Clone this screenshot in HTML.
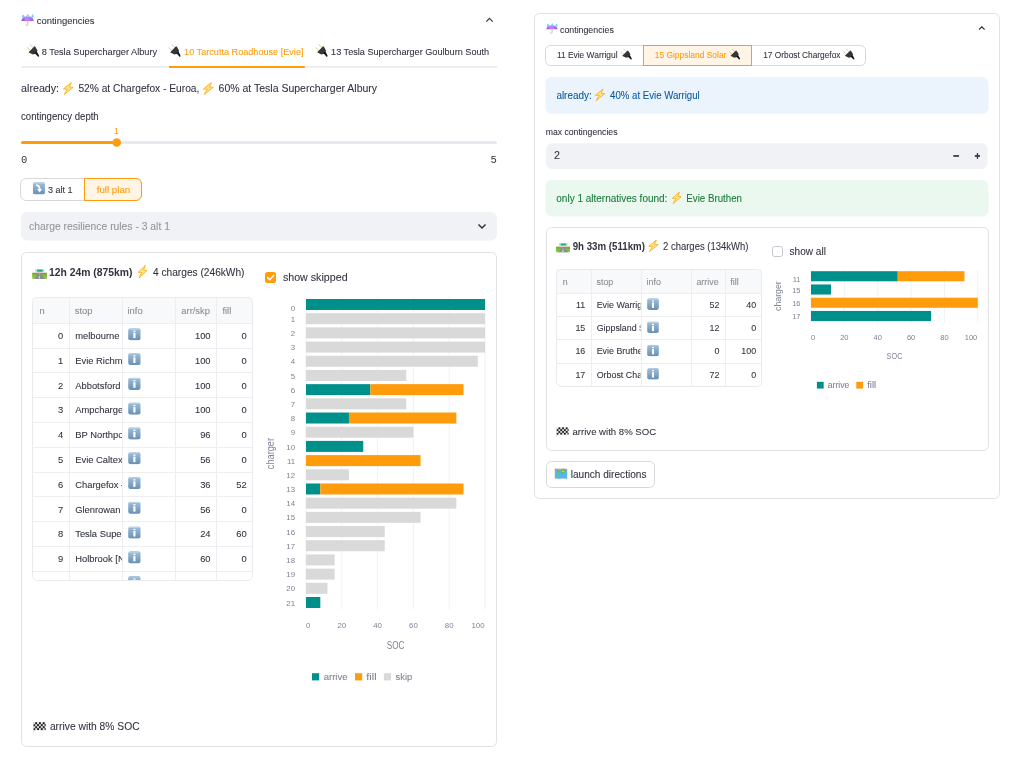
<!DOCTYPE html>
<html><head><meta charset="utf-8"><style>
html,body{margin:0;padding:0;background:#fff;width:1013px;height:762px;overflow:hidden}
svg{display:block;will-change:transform}
</style></head><body>
<svg width="1013" height="762" viewBox="0 0 1013 762" font-family="Liberation Sans, sans-serif">
<defs>
<linearGradient id="gInfo" x1="0" y1="0" x2="0" y2="1"><stop offset="0" stop-color="#A3C1DC"/><stop offset="1" stop-color="#6690B5"/></linearGradient>
<linearGradient id="gGrass" x1="0" y1="0" x2="0" y2="1"><stop offset="0" stop-color="#6AA92B"/><stop offset="1" stop-color="#9BD44A"/></linearGradient>
<linearGradient id="gCanopy" x1="0" y1="0" x2="1" y2="0"><stop offset="0" stop-color="#8A4FE0"/><stop offset="0.5" stop-color="#D27DFF"/><stop offset="1" stop-color="#9558EA"/></linearGradient>
<symbol id="umbrella" viewBox="0 0 32 32" preserveAspectRatio="none">
  <path d="M0.5 19 Q2.5 12 8 8.5 Q16 5.5 24 8.5 Q29.5 12 31.5 19 Z" fill="url(#gCanopy)"/>
  <path d="M16.3 18.8 L16.3 28.5 Q16.3 31.5 13.5 31 Q11.8 30.5 11.8 28" stroke="#B8B8B8" stroke-width="2.2" fill="none"/>
  <path d="M4.5 2 Q0.5 8 3 11 Q6 13 8.5 10 Q9.5 7 4.5 2Z" fill="#74CFFA"/>
  <path d="M16.5 0.5 Q12.5 5.5 14 8.5 Q16.5 11 19.5 8.5 Q21 5.5 16.5 0.5Z" fill="#7DD3FB"/>
  <path d="M28 1.5 Q24 7 25.5 10 Q28 12 31 9.5 Q32 6.5 28 1.5Z" fill="#74CFFA"/>
  <path d="M10.7 10 Q8.5 13.5 10.5 15.5 Q12.8 13.5 10.7 10Z" fill="#9EE2FF"/>
  <path d="M22 9.5 Q20 12.5 22 14 Q24 12.5 22 9.5Z" fill="#55B5F2"/>
</symbol>
<symbol id="plug" viewBox="0 0 32 32" preserveAspectRatio="none">
  <path d="M1.5 8.8 L10 16.8" stroke="#DCC685" stroke-width="2.2" stroke-linecap="round"/>
  <path d="M8.8 1.5 L17.3 9.5" stroke="#DCC685" stroke-width="2.2" stroke-linecap="round"/>
  <path d="M5.3 20.3 L20.1 5.8 L22.2 7 L27.8 16.6 L23.1 24.2 L16 25.9 L5.9 21.4 Z" fill="#363636"/>
  <path d="M20.5 22.5 L26 18.5 L32 30 L29.5 32 Z" fill="#141414"/>
</symbol>
<symbol id="bolt" viewBox="0 0 32 32" preserveAspectRatio="none">
  <path d="M25.3 1.2 L1.2 17.3 L13.2 17.8 L3.4 31 L31 13.2 L19.4 12.2 Z" fill="#FFE57E" stroke="#F6A817" stroke-width="2.2" stroke-linejoin="round"/>
</symbol>
<symbol id="road" viewBox="0 0 32 32" preserveAspectRatio="none">
  <rect x="0" y="12.7" width="32" height="19.3" fill="url(#gGrass)"/>
  <path d="M13.7 12.7 L17.2 12.7 L28.5 32 L4.6 32Z" fill="#8C8C96"/>
  <path d="M15.3 14.5 L15.9 14.5 L16.2 19.5 L15 19.5Z M14.6 22.5 L16.6 22.5 L17.2 30.5 L14 30.5Z" fill="#D6D6DC"/>
  <rect x="6.3" y="0.5" width="20.1" height="12.2" fill="#DADADF"/>
  <rect x="10.2" y="2.5" width="13" height="6.6" rx="2.6" fill="#25B27C"/>
  <rect x="0" y="10.6" width="32" height="1.4" fill="#F0C6C6"/>
</symbol>
<symbol id="flag" viewBox="0 0 32 32" preserveAspectRatio="none">
  <path d="M1 1.5 Q9 0 16 1.5 Q23 3 31 1.5 L31 24.5 Q23 26 16 24.5 Q9 23 1 24.5 Z" fill="#E4E4E4"/>
  <g fill="#1F1F1F">
   <rect x="5.57" y="1.2" width="4.57" height="5.9"/><rect x="14.7" y="1.0" width="4.57" height="5.9"/><rect x="23.9" y="1.0" width="4.57" height="5.9"/>
   <rect x="1" y="7.1" width="4.57" height="5.9"/><rect x="10.14" y="6.8" width="4.57" height="5.9"/><rect x="19.3" y="6.9" width="4.57" height="5.9"/><rect x="28.4" y="6.7" width="2.6" height="5.9"/>
   <rect x="5.57" y="13" width="4.57" height="5.9"/><rect x="14.7" y="12.7" width="4.57" height="5.9"/><rect x="23.9" y="12.8" width="4.57" height="5.9"/>
   <rect x="1" y="18.9" width="4.57" height="5.6"/><rect x="10.14" y="18.6" width="4.57" height="5.6"/><rect x="19.3" y="18.7" width="4.57" height="5.6"/><rect x="28.4" y="18.6" width="2.6" height="5.6"/>
  </g>
  <rect x="0" y="1" width="1.6" height="31" fill="#C8C8C8"/>
</symbol>
<symbol id="map" viewBox="0 0 32 32" preserveAspectRatio="none">
  <rect x="0" y="0" width="32" height="32" fill="#F1DCCF"/>
  <path d="M1.1 2 L11 3 L21 2 L30.9 3 L30.9 30.6 L21 29.6 L11 30.6 L1.1 29.6Z" fill="#53B8EC"/>
  <path d="M5.7 6 Q10 4.5 13.1 7 Q12.5 12 9 13 Q5.5 11 5.7 6Z M9.1 17 Q12 16.5 13.7 18 Q12.5 22 10.5 22.4 Q9 20 9.1 17Z M16.3 6.5 Q23 4 28.9 6 Q28 11 23 12.5 Q21 17 18 19 Q16.5 14 17 11 Q16 9 16.3 6.5Z" fill="#7FB33A"/>
  <path d="M19 8 Q23 7.5 25 9.5 Q22 12 19.5 11.5Z" fill="#E8D65A"/>
  <circle cx="27" cy="21.1" r="1.7" fill="#E89B4A"/>
</symbol>
<symbol id="hook" viewBox="0 0 32 32" preserveAspectRatio="none">
  <rect x="0.5" y="0.5" width="31" height="31" rx="5" fill="url(#gInfo)"/>
  <rect x="3" y="2" width="26" height="1.6" rx="0.8" fill="#D2E2EF" opacity=".8"/>
  <path d="M8.6 7.8 Q17.8 8.2 17.8 18" stroke="#fff" stroke-width="4.3" fill="none"/>
  <path d="M11.2 17.8 L24.2 17.8 L17.8 26.5Z" fill="#fff"/>
</symbol>
<symbol id="info" viewBox="0 0 32 32" preserveAspectRatio="none">
  <rect x="0.5" y="0.5" width="31" height="31" rx="5.5" fill="url(#gInfo)"/>
  <rect x="3" y="2" width="26" height="1.6" rx="0.8" fill="#D2E2EF" opacity=".8"/>
  <rect x="13.3" y="6.5" width="5.4" height="3.2" fill="#fff"/>
  <rect x="13.3" y="12" width="5.4" height="14" fill="#fff"/>
</symbol>
</defs>

<use href="#umbrella" x="21.00" y="13.50" width="13.20" height="12.50"/>
<text x="36.70" y="24.00" font-size="9.5" fill="#31333F" stroke="#31333F" stroke-width="0.08" textLength="57.80" lengthAdjust="spacingAndGlyphs">contingencies</text>
<path d="M486.3 21.6 L489.5 18.4 L492.7 21.6" stroke="#31333F" stroke-width="1.15" fill="none"/>
<rect x="21.00" y="66.00" width="476.00" height="2.00" rx="0" fill="#EEEEF0"/>
<use href="#plug" x="26.50" y="43.90" width="12.70" height="13.00"/>
<text x="41.80" y="55.00" font-size="9.8" fill="#31333F" stroke="#31333F" stroke-width="0.08" textLength="115.30" lengthAdjust="spacingAndGlyphs">8 Tesla Supercharger Albury</text>
<use href="#plug" x="168.10" y="43.90" width="12.70" height="13.00"/>
<text x="184.10" y="55.00" font-size="9.8" fill="#FF9C0B" stroke="#FF9C0B" stroke-width="0.08" textLength="119.40" lengthAdjust="spacingAndGlyphs">10 Tarcutta Roadhouse [Evie]</text>
<use href="#plug" x="315.10" y="43.90" width="12.70" height="13.00"/>
<text x="331.10" y="55.00" font-size="9.8" fill="#31333F" stroke="#31333F" stroke-width="0.08" textLength="158.10" lengthAdjust="spacingAndGlyphs">13 Tesla Supercharger Goulburn South</text>
<rect x="169.00" y="66.00" width="135.80" height="2.00" rx="0" fill="#FF9C0B"/>
<text x="21.10" y="92.00" font-size="11" fill="#31333F" stroke="#31333F" stroke-width="0.08" textLength="38.00" lengthAdjust="spacingAndGlyphs">already:</text>
<use href="#bolt" x="63.00" y="82.00" width="10.60" height="13.00"/>
<text x="78.40" y="92.00" font-size="11" fill="#31333F" stroke="#31333F" stroke-width="0.08" textLength="121.00" lengthAdjust="spacingAndGlyphs">52% at Chargefox - Euroa,</text>
<use href="#bolt" x="203.00" y="82.00" width="10.70" height="13.00"/>
<text x="218.60" y="92.00" font-size="11" fill="#31333F" stroke="#31333F" stroke-width="0.08" textLength="158.50" lengthAdjust="spacingAndGlyphs">60% at Tesla Supercharger Albury</text>
<text x="21.10" y="120.00" font-size="10.1" fill="#31333F" stroke="#31333F" stroke-width="0.08" textLength="77.60" lengthAdjust="spacingAndGlyphs">contingency depth</text>
<rect x="21.00" y="141.00" width="476.00" height="3.00" rx="1.5" fill="#E8EAEF"/>
<rect x="21.00" y="141.00" width="96.00" height="3.00" rx="1.5" fill="#FF9C0B"/>
<circle cx="116.7" cy="142.5" r="4.3" fill="#FF9C0B"/>
<text x="116.50" y="134.00" font-size="8.8" fill="#FF9C0B" stroke="#FF9C0B" stroke-width="0.08" text-anchor="middle">1</text>
<text x="21.00" y="163.00" font-size="10.5" fill="#31333F" font-family="Liberation Mono">0</text>
<text x="496.80" y="163.00" font-size="10.5" fill="#31333F" text-anchor="end" font-family="Liberation Mono">5</text>
<rect x="20.50" y="178.50" width="121.00" height="22.00" rx="5.5" fill="#fff" stroke="#D8D8DC" stroke-width="1"/>
<path d="M84.5 178.5 H136 A5.5 5.5 0 0 1 141.5 184 V195 A5.5 5.5 0 0 1 136 200.5 H84.5 Z" fill="#FFF4E6" stroke="#FF9C0B" stroke-width="1"/>
<use href="#hook" x="32.80" y="182.00" width="12.30" height="12.60"/>
<text x="47.90" y="193.00" font-size="9.8" fill="#31333F" stroke="#31333F" stroke-width="0.08" textLength="24.60" lengthAdjust="spacingAndGlyphs">3 alt 1</text>
<text x="96.70" y="193.00" font-size="9.8" fill="#FF9C0B" stroke="#FF9C0B" stroke-width="0.08" textLength="33.60" lengthAdjust="spacingAndGlyphs">full plan</text>
<rect x="21.00" y="212.00" width="476.00" height="28.50" rx="6" fill="#F0F2F6"/>
<text x="29.10" y="230.00" font-size="10.6" fill="#94959C" stroke="#94959C" stroke-width="0.08" textLength="140.80" lengthAdjust="spacingAndGlyphs">charge resilience rules - 3 alt 1</text>
<path d="M478.5 224.5 L482 228 L485.5 224.5" stroke="#31333F" stroke-width="1.5" fill="none"/>
<rect x="21.50" y="252.50" width="475.00" height="494.00" rx="5" fill="none" stroke="#E1E1E3" stroke-width="1"/>
<use href="#road" x="32.10" y="268.70" width="14.90" height="10.30"/>
<text x="49.00" y="276.00" font-size="10.3" fill="#31333F" font-weight="700" textLength="83.50" lengthAdjust="spacingAndGlyphs">12h 24m (875km)</text>
<use href="#bolt" x="137.90" y="264.90" width="9.40" height="13.60"/>
<text x="153.00" y="276.00" font-size="10.2" fill="#31333F" stroke="#31333F" stroke-width="0.08" textLength="91.50" lengthAdjust="spacingAndGlyphs">4 charges (246kWh)</text>
<rect x="265.00" y="272.00" width="11.00" height="11.00" rx="2.5" fill="#FF9C0B"/>
<path d="M267.6 277.6 L269.8 279.7 L273.6 275.4" stroke="#fff" stroke-width="1.5" fill="none" stroke-linecap="round" stroke-linejoin="round"/>
<text x="282.90" y="281.00" font-size="10.8" fill="#31333F" stroke="#31333F" stroke-width="0.08" textLength="64.70" lengthAdjust="spacingAndGlyphs">show skipped</text>
<svg x="32" y="297" width="221" height="284" overflow="hidden"><g transform="translate(-32,-297)">
<rect x="32.00" y="297.00" width="221.00" height="26.00" rx="0" fill="#F8F9FB"/>
<rect x="32.00" y="323.00" width="221.00" height="1.00" rx="0" fill="#EDEEF1"/>
<rect x="32.00" y="348.00" width="221.00" height="1.00" rx="0" fill="#EDEEF1"/>
<rect x="32.00" y="372.00" width="221.00" height="1.00" rx="0" fill="#EDEEF1"/>
<rect x="32.00" y="397.00" width="221.00" height="1.00" rx="0" fill="#EDEEF1"/>
<rect x="32.00" y="422.00" width="221.00" height="1.00" rx="0" fill="#EDEEF1"/>
<rect x="32.00" y="447.00" width="221.00" height="1.00" rx="0" fill="#EDEEF1"/>
<rect x="32.00" y="472.00" width="221.00" height="1.00" rx="0" fill="#EDEEF1"/>
<rect x="32.00" y="496.00" width="221.00" height="1.00" rx="0" fill="#EDEEF1"/>
<rect x="32.00" y="521.00" width="221.00" height="1.00" rx="0" fill="#EDEEF1"/>
<rect x="32.00" y="546.00" width="221.00" height="1.00" rx="0" fill="#EDEEF1"/>
<rect x="32.00" y="571.00" width="221.00" height="1.00" rx="0" fill="#EDEEF1"/>
<rect x="69.00" y="297.00" width="1.00" height="284.00" rx="0" fill="#EDEEF1"/>
<rect x="122.00" y="297.00" width="1.00" height="284.00" rx="0" fill="#EDEEF1"/>
<rect x="175.00" y="297.00" width="1.00" height="284.00" rx="0" fill="#EDEEF1"/>
<rect x="216.00" y="297.00" width="1.00" height="284.00" rx="0" fill="#EDEEF1"/>
<text x="39.40" y="314.00" font-size="9.4" fill="#8B8C94" stroke="#8B8C94" stroke-width="0.08">n</text>
<text x="74.70" y="314.00" font-size="9.4" fill="#8B8C94" stroke="#8B8C94" stroke-width="0.08">stop</text>
<text x="127.50" y="314.00" font-size="9.4" fill="#8B8C94" stroke="#8B8C94" stroke-width="0.08">info</text>
<text x="181.30" y="314.00" font-size="9.4" fill="#8B8C94" stroke="#8B8C94" stroke-width="0.08">arr/skp</text>
<text x="222.40" y="314.00" font-size="9.4" fill="#8B8C94" stroke="#8B8C94" stroke-width="0.08">fill</text>
<text x="63.30" y="339.00" font-size="9.4" fill="#31333F" stroke="#31333F" stroke-width="0.08" text-anchor="end">0</text>
<svg x="69.2" y="327.0" width="52.39999999999999" height="16" overflow="hidden">
<text x="6.00" y="12.00" font-size="9.4" fill="#31333F" stroke="#31333F" stroke-width="0.08">melbourne</text>
</svg>
<use href="#info" x="128.00" y="328.00" width="12.80" height="12.50"/>
<text x="210.60" y="339.00" font-size="9.4" fill="#31333F" stroke="#31333F" stroke-width="0.08" text-anchor="end">100</text>
<text x="246.70" y="339.00" font-size="9.4" fill="#31333F" stroke="#31333F" stroke-width="0.08" text-anchor="end">0</text>
<text x="63.30" y="363.79" font-size="9.4" fill="#31333F" stroke="#31333F" stroke-width="0.08" text-anchor="end">1</text>
<svg x="69.2" y="351.79" width="52.39999999999999" height="16" overflow="hidden">
<text x="6.00" y="12.00" font-size="9.4" fill="#31333F" stroke="#31333F" stroke-width="0.08">Evie Richmond</text>
</svg>
<use href="#info" x="128.00" y="352.79" width="12.80" height="12.50"/>
<text x="210.60" y="363.79" font-size="9.4" fill="#31333F" stroke="#31333F" stroke-width="0.08" text-anchor="end">100</text>
<text x="246.70" y="363.79" font-size="9.4" fill="#31333F" stroke="#31333F" stroke-width="0.08" text-anchor="end">0</text>
<text x="63.30" y="388.58" font-size="9.4" fill="#31333F" stroke="#31333F" stroke-width="0.08" text-anchor="end">2</text>
<svg x="69.2" y="376.58" width="52.39999999999999" height="16" overflow="hidden">
<text x="6.00" y="12.00" font-size="9.4" fill="#31333F" stroke="#31333F" stroke-width="0.08">Abbotsford</text>
</svg>
<use href="#info" x="128.00" y="377.58" width="12.80" height="12.50"/>
<text x="210.60" y="388.58" font-size="9.4" fill="#31333F" stroke="#31333F" stroke-width="0.08" text-anchor="end">100</text>
<text x="246.70" y="388.58" font-size="9.4" fill="#31333F" stroke="#31333F" stroke-width="0.08" text-anchor="end">0</text>
<text x="63.30" y="413.37" font-size="9.4" fill="#31333F" stroke="#31333F" stroke-width="0.08" text-anchor="end">3</text>
<svg x="69.2" y="401.37" width="52.39999999999999" height="16" overflow="hidden">
<text x="6.00" y="12.00" font-size="9.4" fill="#31333F" stroke="#31333F" stroke-width="0.08">Ampcharge</text>
</svg>
<use href="#info" x="128.00" y="402.37" width="12.80" height="12.50"/>
<text x="210.60" y="413.37" font-size="9.4" fill="#31333F" stroke="#31333F" stroke-width="0.08" text-anchor="end">100</text>
<text x="246.70" y="413.37" font-size="9.4" fill="#31333F" stroke="#31333F" stroke-width="0.08" text-anchor="end">0</text>
<text x="63.30" y="438.16" font-size="9.4" fill="#31333F" stroke="#31333F" stroke-width="0.08" text-anchor="end">4</text>
<svg x="69.2" y="426.15999999999997" width="52.39999999999999" height="16" overflow="hidden">
<text x="6.00" y="12.00" font-size="9.4" fill="#31333F" stroke="#31333F" stroke-width="0.08">BP Northpoint</text>
</svg>
<use href="#info" x="128.00" y="427.16" width="12.80" height="12.50"/>
<text x="210.60" y="438.16" font-size="9.4" fill="#31333F" stroke="#31333F" stroke-width="0.08" text-anchor="end">96</text>
<text x="246.70" y="438.16" font-size="9.4" fill="#31333F" stroke="#31333F" stroke-width="0.08" text-anchor="end">0</text>
<text x="63.30" y="462.95" font-size="9.4" fill="#31333F" stroke="#31333F" stroke-width="0.08" text-anchor="end">5</text>
<svg x="69.2" y="450.95" width="52.39999999999999" height="16" overflow="hidden">
<text x="6.00" y="12.00" font-size="9.4" fill="#31333F" stroke="#31333F" stroke-width="0.08">Evie Caltex</text>
</svg>
<use href="#info" x="128.00" y="451.95" width="12.80" height="12.50"/>
<text x="210.60" y="462.95" font-size="9.4" fill="#31333F" stroke="#31333F" stroke-width="0.08" text-anchor="end">56</text>
<text x="246.70" y="462.95" font-size="9.4" fill="#31333F" stroke="#31333F" stroke-width="0.08" text-anchor="end">0</text>
<text x="63.30" y="487.74" font-size="9.4" fill="#31333F" stroke="#31333F" stroke-width="0.08" text-anchor="end">6</text>
<svg x="69.2" y="475.74" width="52.39999999999999" height="16" overflow="hidden">
<text x="6.00" y="12.00" font-size="9.4" fill="#31333F" stroke="#31333F" stroke-width="0.08">Chargefox - Euroa</text>
</svg>
<use href="#info" x="128.00" y="476.74" width="12.80" height="12.50"/>
<text x="210.60" y="487.74" font-size="9.4" fill="#31333F" stroke="#31333F" stroke-width="0.08" text-anchor="end">36</text>
<text x="246.70" y="487.74" font-size="9.4" fill="#31333F" stroke="#31333F" stroke-width="0.08" text-anchor="end">52</text>
<text x="63.30" y="512.53" font-size="9.4" fill="#31333F" stroke="#31333F" stroke-width="0.08" text-anchor="end">7</text>
<svg x="69.2" y="500.53" width="52.39999999999999" height="16" overflow="hidden">
<text x="6.00" y="12.00" font-size="9.4" fill="#31333F" stroke="#31333F" stroke-width="0.08">Glenrowan</text>
</svg>
<use href="#info" x="128.00" y="501.53" width="12.80" height="12.50"/>
<text x="210.60" y="512.53" font-size="9.4" fill="#31333F" stroke="#31333F" stroke-width="0.08" text-anchor="end">56</text>
<text x="246.70" y="512.53" font-size="9.4" fill="#31333F" stroke="#31333F" stroke-width="0.08" text-anchor="end">0</text>
<text x="63.30" y="537.32" font-size="9.4" fill="#31333F" stroke="#31333F" stroke-width="0.08" text-anchor="end">8</text>
<svg x="69.2" y="525.3199999999999" width="52.39999999999999" height="16" overflow="hidden">
<text x="6.00" y="12.00" font-size="9.4" fill="#31333F" stroke="#31333F" stroke-width="0.08">Tesla Supercharger</text>
</svg>
<use href="#info" x="128.00" y="526.32" width="12.80" height="12.50"/>
<text x="210.60" y="537.32" font-size="9.4" fill="#31333F" stroke="#31333F" stroke-width="0.08" text-anchor="end">24</text>
<text x="246.70" y="537.32" font-size="9.4" fill="#31333F" stroke="#31333F" stroke-width="0.08" text-anchor="end">60</text>
<text x="63.30" y="562.11" font-size="9.4" fill="#31333F" stroke="#31333F" stroke-width="0.08" text-anchor="end">9</text>
<svg x="69.2" y="550.11" width="52.39999999999999" height="16" overflow="hidden">
<text x="6.00" y="12.00" font-size="9.4" fill="#31333F" stroke="#31333F" stroke-width="0.08">Holbrook [NSW]</text>
</svg>
<use href="#info" x="128.00" y="551.11" width="12.80" height="12.50"/>
<text x="210.60" y="562.11" font-size="9.4" fill="#31333F" stroke="#31333F" stroke-width="0.08" text-anchor="end">60</text>
<text x="246.70" y="562.11" font-size="9.4" fill="#31333F" stroke="#31333F" stroke-width="0.08" text-anchor="end">0</text>
<text x="63.30" y="585.90" font-size="9.4" fill="#31333F" stroke="#31333F" stroke-width="0.08" text-anchor="end">10</text>
<svg x="69.2" y="573.9" width="52.39999999999999" height="16" overflow="hidden">
<text x="6.00" y="12.00" font-size="9.4" fill="#31333F" stroke="#31333F" stroke-width="0.08">Tarcutta Roadhouse</text>
</svg>
<use href="#info" x="128.00" y="575.90" width="12.80" height="12.50"/>
<text x="210.60" y="585.90" font-size="9.4" fill="#31333F" stroke="#31333F" stroke-width="0.08" text-anchor="end">24</text>
<text x="246.70" y="585.90" font-size="9.4" fill="#31333F" stroke="#31333F" stroke-width="0.08" text-anchor="end">64</text>
</g></svg>
<rect x="32.50" y="297.50" width="220.00" height="283.00" rx="5" fill="none" stroke="#E9EAEE" stroke-width="1"/>
<svg x="556" y="269" width="206" height="118" overflow="hidden"><g transform="translate(-556,-269)">
<rect x="556.00" y="269.00" width="206.00" height="24.00" rx="0" fill="#F8F9FB"/>
<rect x="556.00" y="293.00" width="206.00" height="1.00" rx="0" fill="#EDEEF1"/>
<rect x="556.00" y="316.00" width="206.00" height="1.00" rx="0" fill="#EDEEF1"/>
<rect x="556.00" y="339.00" width="206.00" height="1.00" rx="0" fill="#EDEEF1"/>
<rect x="556.00" y="363.00" width="206.00" height="1.00" rx="0" fill="#EDEEF1"/>
<rect x="591.00" y="269.00" width="1.00" height="118.00" rx="0" fill="#EDEEF1"/>
<rect x="641.00" y="269.00" width="1.00" height="118.00" rx="0" fill="#EDEEF1"/>
<rect x="691.00" y="269.00" width="1.00" height="118.00" rx="0" fill="#EDEEF1"/>
<rect x="725.00" y="269.00" width="1.00" height="118.00" rx="0" fill="#EDEEF1"/>
<text x="562.70" y="285.00" font-size="8.9" fill="#8B8C94" stroke="#8B8C94" stroke-width="0.08">n</text>
<text x="596.50" y="285.00" font-size="8.9" fill="#8B8C94" stroke="#8B8C94" stroke-width="0.08">stop</text>
<text x="646.60" y="285.00" font-size="8.9" fill="#8B8C94" stroke="#8B8C94" stroke-width="0.08">info</text>
<text x="696.40" y="285.00" font-size="8.9" fill="#8B8C94" stroke="#8B8C94" stroke-width="0.08">arrive</text>
<text x="730.30" y="285.00" font-size="8.9" fill="#8B8C94" stroke="#8B8C94" stroke-width="0.08">fill</text>
<text x="585.30" y="308.00" font-size="8.9" fill="#31333F" stroke="#31333F" stroke-width="0.08" text-anchor="end">11</text>
<svg x="591.5" y="296.0" width="48.89999999999998" height="16" overflow="hidden">
<text x="5.20" y="12.00" font-size="8.9" fill="#31333F" stroke="#31333F" stroke-width="0.08">Evie Warrigul</text>
</svg>
<use href="#info" x="647.00" y="298.10" width="12.00" height="12.00"/>
<text x="719.40" y="308.00" font-size="8.9" fill="#31333F" stroke="#31333F" stroke-width="0.08" text-anchor="end">52</text>
<text x="756.10" y="308.00" font-size="8.9" fill="#31333F" stroke="#31333F" stroke-width="0.08" text-anchor="end">40</text>
<text x="585.30" y="331.20" font-size="8.9" fill="#31333F" stroke="#31333F" stroke-width="0.08" text-anchor="end">15</text>
<svg x="591.5" y="319.2" width="48.89999999999998" height="16" overflow="hidden">
<text x="5.20" y="12.00" font-size="8.9" fill="#31333F" stroke="#31333F" stroke-width="0.08">Gippsland Solar</text>
</svg>
<use href="#info" x="647.00" y="321.30" width="12.00" height="12.00"/>
<text x="719.40" y="331.20" font-size="8.9" fill="#31333F" stroke="#31333F" stroke-width="0.08" text-anchor="end">12</text>
<text x="756.10" y="331.20" font-size="8.9" fill="#31333F" stroke="#31333F" stroke-width="0.08" text-anchor="end">0</text>
<text x="585.30" y="354.40" font-size="8.9" fill="#31333F" stroke="#31333F" stroke-width="0.08" text-anchor="end">16</text>
<svg x="591.5" y="342.4" width="48.89999999999998" height="16" overflow="hidden">
<text x="5.20" y="12.00" font-size="8.9" fill="#31333F" stroke="#31333F" stroke-width="0.08">Evie Bruthen</text>
</svg>
<use href="#info" x="647.00" y="344.50" width="12.00" height="12.00"/>
<text x="719.40" y="354.40" font-size="8.9" fill="#31333F" stroke="#31333F" stroke-width="0.08" text-anchor="end">0</text>
<text x="756.10" y="354.40" font-size="8.9" fill="#31333F" stroke="#31333F" stroke-width="0.08" text-anchor="end">100</text>
<text x="585.30" y="377.60" font-size="8.9" fill="#31333F" stroke="#31333F" stroke-width="0.08" text-anchor="end">17</text>
<svg x="591.5" y="365.6" width="48.89999999999998" height="16" overflow="hidden">
<text x="5.20" y="12.00" font-size="8.9" fill="#31333F" stroke="#31333F" stroke-width="0.08">Orbost Chargefox</text>
</svg>
<use href="#info" x="647.00" y="367.70" width="12.00" height="12.00"/>
<text x="719.40" y="377.60" font-size="8.9" fill="#31333F" stroke="#31333F" stroke-width="0.08" text-anchor="end">72</text>
<text x="756.10" y="377.60" font-size="8.9" fill="#31333F" stroke="#31333F" stroke-width="0.08" text-anchor="end">0</text>
</g></svg>
<rect x="556.50" y="269.50" width="205.00" height="117.00" rx="5" fill="none" stroke="#E9EAEE" stroke-width="1"/>
<rect x="305.50" y="297.00" width="1.00" height="312.50" rx="0" fill="#F1F2F5"/>
<rect x="341.30" y="297.00" width="1.00" height="312.50" rx="0" fill="#F1F2F5"/>
<rect x="377.10" y="297.00" width="1.00" height="312.50" rx="0" fill="#F1F2F5"/>
<rect x="412.90" y="297.00" width="1.00" height="312.50" rx="0" fill="#F1F2F5"/>
<rect x="448.70" y="297.00" width="1.00" height="312.50" rx="0" fill="#F1F2F5"/>
<rect x="484.50" y="297.00" width="1.00" height="312.50" rx="0" fill="#F1F2F5"/>
<rect x="306.00" y="299.00" width="179.00" height="11.00" rx="0" fill="#00908C"/>
<text x="295.00" y="310.50" font-size="7.8" fill="#7E8294" text-anchor="end">0</text>
<rect x="306.00" y="313.19" width="179.00" height="11.00" rx="0" fill="#D9D9D9"/>
<text x="295.00" y="321.79" font-size="7.8" fill="#7E8294" text-anchor="end">1</text>
<rect x="306.00" y="327.38" width="179.00" height="11.00" rx="0" fill="#D9D9D9"/>
<text x="295.00" y="335.98" font-size="7.8" fill="#7E8294" text-anchor="end">2</text>
<rect x="306.00" y="341.57" width="179.00" height="11.00" rx="0" fill="#D9D9D9"/>
<text x="295.00" y="350.17" font-size="7.8" fill="#7E8294" text-anchor="end">3</text>
<rect x="306.00" y="355.76" width="171.84" height="11.00" rx="0" fill="#D9D9D9"/>
<text x="295.00" y="364.36" font-size="7.8" fill="#7E8294" text-anchor="end">4</text>
<rect x="306.00" y="369.95" width="100.24" height="11.00" rx="0" fill="#D9D9D9"/>
<text x="295.00" y="378.55" font-size="7.8" fill="#7E8294" text-anchor="end">5</text>
<rect x="306.00" y="384.14" width="64.44" height="11.00" rx="0" fill="#00908C"/>
<rect x="370.44" y="384.14" width="93.08" height="11.00" rx="0" fill="#FF9C0B"/>
<text x="295.00" y="392.74" font-size="7.8" fill="#7E8294" text-anchor="end">6</text>
<rect x="306.00" y="398.33" width="100.24" height="11.00" rx="0" fill="#D9D9D9"/>
<text x="295.00" y="406.93" font-size="7.8" fill="#7E8294" text-anchor="end">7</text>
<rect x="306.00" y="412.52" width="42.96" height="11.00" rx="0" fill="#00908C"/>
<rect x="348.96" y="412.52" width="107.40" height="11.00" rx="0" fill="#FF9C0B"/>
<text x="295.00" y="421.12" font-size="7.8" fill="#7E8294" text-anchor="end">8</text>
<rect x="306.00" y="426.71" width="107.40" height="11.00" rx="0" fill="#D9D9D9"/>
<text x="295.00" y="435.31" font-size="7.8" fill="#7E8294" text-anchor="end">9</text>
<rect x="306.00" y="440.90" width="57.28" height="11.00" rx="0" fill="#00908C"/>
<text x="295.00" y="449.50" font-size="7.8" fill="#7E8294" text-anchor="end">10</text>
<rect x="306.00" y="455.10" width="114.56" height="11.00" rx="0" fill="#FF9C0B"/>
<text x="295.00" y="463.70" font-size="7.8" fill="#7E8294" text-anchor="end">11</text>
<rect x="306.00" y="469.29" width="42.96" height="11.00" rx="0" fill="#D9D9D9"/>
<text x="295.00" y="477.89" font-size="7.8" fill="#7E8294" text-anchor="end">12</text>
<rect x="306.00" y="483.48" width="14.32" height="11.00" rx="0" fill="#00908C"/>
<rect x="320.32" y="483.48" width="143.20" height="11.00" rx="0" fill="#FF9C0B"/>
<text x="295.00" y="492.08" font-size="7.8" fill="#7E8294" text-anchor="end">13</text>
<rect x="306.00" y="497.67" width="150.36" height="11.00" rx="0" fill="#D9D9D9"/>
<text x="295.00" y="506.27" font-size="7.8" fill="#7E8294" text-anchor="end">14</text>
<rect x="306.00" y="511.86" width="114.56" height="11.00" rx="0" fill="#D9D9D9"/>
<text x="295.00" y="520.46" font-size="7.8" fill="#7E8294" text-anchor="end">15</text>
<rect x="306.00" y="526.05" width="78.76" height="11.00" rx="0" fill="#D9D9D9"/>
<text x="295.00" y="534.65" font-size="7.8" fill="#7E8294" text-anchor="end">16</text>
<rect x="306.00" y="540.24" width="78.76" height="11.00" rx="0" fill="#D9D9D9"/>
<text x="295.00" y="548.84" font-size="7.8" fill="#7E8294" text-anchor="end">17</text>
<rect x="306.00" y="554.43" width="28.64" height="11.00" rx="0" fill="#D9D9D9"/>
<text x="295.00" y="563.03" font-size="7.8" fill="#7E8294" text-anchor="end">18</text>
<rect x="306.00" y="568.62" width="28.64" height="11.00" rx="0" fill="#D9D9D9"/>
<text x="295.00" y="577.22" font-size="7.8" fill="#7E8294" text-anchor="end">19</text>
<rect x="306.00" y="582.81" width="21.48" height="11.00" rx="0" fill="#D9D9D9"/>
<text x="295.00" y="591.41" font-size="7.8" fill="#7E8294" text-anchor="end">20</text>
<rect x="306.00" y="597.00" width="14.32" height="11.00" rx="0" fill="#00908C"/>
<text x="295.00" y="605.60" font-size="7.8" fill="#7E8294" text-anchor="end">21</text>
<text x="306.00" y="628.00" font-size="7.8" fill="#7E8294">0</text>
<text x="341.80" y="628.00" font-size="7.8" fill="#7E8294" text-anchor="middle">20</text>
<text x="377.60" y="628.00" font-size="7.8" fill="#7E8294" text-anchor="middle">40</text>
<text x="413.40" y="628.00" font-size="7.8" fill="#7E8294" text-anchor="middle">60</text>
<text x="449.20" y="628.00" font-size="7.8" fill="#7E8294" text-anchor="middle">80</text>
<text x="484.50" y="628.00" font-size="7.8" fill="#7E8294" text-anchor="end">100</text>
<text x="395.60" y="649.00" font-size="10.6" fill="#7E8294" text-anchor="middle" textLength="17.60" lengthAdjust="spacingAndGlyphs">SOC</text>
<text transform="translate(273.5,453.6) rotate(-90)" font-size="10.6" fill="#7E8294" text-anchor="middle" textLength="31.2" lengthAdjust="spacingAndGlyphs">charger</text>
<rect x="312.00" y="673.20" width="7.20" height="7.20" rx="0" fill="#00908C"/>
<text x="323.70" y="680.00" font-size="9.6" fill="#7E8294" stroke="#7E8294" stroke-width="0.08" textLength="23.90" lengthAdjust="spacingAndGlyphs">arrive</text>
<rect x="355.00" y="673.20" width="7.20" height="7.20" rx="0" fill="#FF9C0B"/>
<text x="366.30" y="680.00" font-size="9.6" fill="#7E8294" stroke="#7E8294" stroke-width="0.08" textLength="10.30" lengthAdjust="spacingAndGlyphs">fill</text>
<rect x="383.90" y="673.20" width="7.20" height="7.20" rx="0" fill="#D9D9D9"/>
<text x="395.60" y="680.00" font-size="9.6" fill="#7E8294" stroke="#7E8294" stroke-width="0.08" textLength="16.60" lengthAdjust="spacingAndGlyphs">skip</text>
<rect x="810.50" y="270.00" width="1.00" height="53.00" rx="0" fill="#F1F2F5"/>
<rect x="843.86" y="270.00" width="1.00" height="53.00" rx="0" fill="#F1F2F5"/>
<rect x="877.22" y="270.00" width="1.00" height="53.00" rx="0" fill="#F1F2F5"/>
<rect x="910.58" y="270.00" width="1.00" height="53.00" rx="0" fill="#F1F2F5"/>
<rect x="943.94" y="270.00" width="1.00" height="53.00" rx="0" fill="#F1F2F5"/>
<rect x="977.30" y="270.00" width="1.00" height="53.00" rx="0" fill="#F1F2F5"/>
<rect x="811.00" y="271.20" width="86.74" height="10.10" rx="0" fill="#00908C"/>
<rect x="897.74" y="271.20" width="66.72" height="10.10" rx="0" fill="#FF9C0B"/>
<text x="800.50" y="282.00" font-size="7.5" fill="#7E8294" text-anchor="end">11</text>
<rect x="811.00" y="284.45" width="20.02" height="10.10" rx="0" fill="#00908C"/>
<text x="800.50" y="292.50" font-size="7.5" fill="#7E8294" text-anchor="end">15</text>
<rect x="811.00" y="297.70" width="166.80" height="10.10" rx="0" fill="#FF9C0B"/>
<text x="800.50" y="305.70" font-size="7.5" fill="#7E8294" text-anchor="end">16</text>
<rect x="811.00" y="310.95" width="120.10" height="10.10" rx="0" fill="#00908C"/>
<text x="800.50" y="318.90" font-size="7.5" fill="#7E8294" text-anchor="end">17</text>
<text x="811.00" y="340.00" font-size="7.5" fill="#7E8294">0</text>
<text x="844.36" y="340.00" font-size="7.5" fill="#7E8294" text-anchor="middle">20</text>
<text x="877.72" y="340.00" font-size="7.5" fill="#7E8294" text-anchor="middle">40</text>
<text x="911.08" y="340.00" font-size="7.5" fill="#7E8294" text-anchor="middle">60</text>
<text x="944.44" y="340.00" font-size="7.5" fill="#7E8294" text-anchor="middle">80</text>
<text x="977.30" y="340.00" font-size="7.5" fill="#7E8294" text-anchor="end">100</text>
<text x="894.50" y="359.00" font-size="9.6" fill="#7E8294" text-anchor="middle" textLength="15.80" lengthAdjust="spacingAndGlyphs">SOC</text>
<text transform="translate(781.2,296.1) rotate(-90)" font-size="9.6" fill="#7E8294" text-anchor="middle" textLength="29.6" lengthAdjust="spacingAndGlyphs">charger</text>
<rect x="816.90" y="381.80" width="6.80" height="6.80" rx="0" fill="#00908C"/>
<text x="827.80" y="388.00" font-size="9.0" fill="#7E8294" stroke="#7E8294" stroke-width="0.08" textLength="21.60" lengthAdjust="spacingAndGlyphs">arrive</text>
<rect x="856.30" y="381.80" width="6.80" height="6.80" rx="0" fill="#FF9C0B"/>
<text x="867.20" y="388.00" font-size="9.0" fill="#7E8294" stroke="#7E8294" stroke-width="0.08" textLength="9.00" lengthAdjust="spacingAndGlyphs">fill</text>
<use href="#flag" x="32.90" y="721.80" width="13.20" height="10.90"/>
<text x="49.90" y="730.00" font-size="10.5" fill="#31333F" stroke="#31333F" stroke-width="0.08" textLength="89.70" lengthAdjust="spacingAndGlyphs">arrive with 8% SOC</text>
<rect x="534.50" y="13.50" width="465.00" height="485.00" rx="5" fill="none" stroke="#E1E1E3" stroke-width="1"/>
<use href="#umbrella" x="546.00" y="22.90" width="12.00" height="10.90"/>
<text x="560.00" y="33.00" font-size="9.2" fill="#31333F" stroke="#31333F" stroke-width="0.08" textLength="53.80" lengthAdjust="spacingAndGlyphs">contingencies</text>
<path d="M979 29.5 L981.8 26.8 L984.6 29.5" stroke="#31333F" stroke-width="1.1" fill="none"/>
<rect x="545.50" y="45.50" width="320.00" height="20.00" rx="5" fill="#fff" stroke="#D8D8DC" stroke-width="1"/>
<rect x="643.50" y="45.50" width="108.00" height="20.00" rx="0" fill="#FFF4E6" stroke="#FF9C0B" stroke-width="1"/>
<text x="556.90" y="58.00" font-size="8.8" fill="#31333F" stroke="#31333F" stroke-width="0.08" textLength="60.70" lengthAdjust="spacingAndGlyphs">11 Evie Warrigul</text>
<use href="#plug" x="620.30" y="48.40" width="11.70" height="11.40"/>
<text x="654.70" y="58.00" font-size="8.8" fill="#FF9C0B" stroke="#FF9C0B" stroke-width="0.08" textLength="71.70" lengthAdjust="spacingAndGlyphs">15 Gippsland Solar</text>
<use href="#plug" x="728.60" y="48.40" width="11.70" height="11.40"/>
<text x="763.20" y="58.00" font-size="8.8" fill="#31333F" stroke="#31333F" stroke-width="0.08" textLength="77.30" lengthAdjust="spacingAndGlyphs">17 Orbost Chargefox</text>
<use href="#plug" x="843.00" y="48.40" width="11.70" height="11.40"/>
<rect x="545.50" y="77.00" width="443.00" height="36.80" rx="6" fill="#EBF3FD"/>
<text x="556.40" y="99.00" font-size="10.2" fill="#0B5AA0" stroke="#0B5AA0" stroke-width="0.08" textLength="35.30" lengthAdjust="spacingAndGlyphs">already:</text>
<use href="#bolt" x="595.00" y="88.50" width="10.20" height="12.50"/>
<text x="610.10" y="99.00" font-size="10.2" fill="#0B5AA0" stroke="#0B5AA0" stroke-width="0.08" textLength="89.60" lengthAdjust="spacingAndGlyphs">40% at Evie Warrigul</text>
<text x="545.70" y="135.00" font-size="8.6" fill="#31333F" stroke="#31333F" stroke-width="0.08" textLength="71.80" lengthAdjust="spacingAndGlyphs">max contingencies</text>
<rect x="546.00" y="143.20" width="441.50" height="25.80" rx="6" fill="#F0F2F6"/>
<text x="554.00" y="159.40" font-size="10.7" fill="#31333F" stroke="#31333F" stroke-width="0.08">2</text>
<rect x="953.30" y="155.10" width="5.70" height="1.70" rx="0" fill="#31333F"/>
<rect x="974.80" y="155.10" width="5.20" height="1.70" rx="0" fill="#31333F"/>
<rect x="976.80" y="153.10" width="1.30" height="5.70" rx="0" fill="#31333F"/>
<rect x="545.50" y="180.00" width="443.00" height="36.50" rx="6" fill="#EBF8EF"/>
<text x="556.30" y="202.00" font-size="10.2" fill="#177A3A" stroke="#177A3A" stroke-width="0.08" textLength="111.10" lengthAdjust="spacingAndGlyphs">only 1 alternatives found:</text>
<use href="#bolt" x="672.00" y="191.50" width="9.50" height="12.50"/>
<text x="686.30" y="202.00" font-size="10.2" fill="#177A3A" stroke="#177A3A" stroke-width="0.08" textLength="55.70" lengthAdjust="spacingAndGlyphs">Evie Bruthen</text>
<rect x="546.50" y="227.50" width="442.00" height="223.00" rx="5" fill="none" stroke="#E1E1E3" stroke-width="1"/>
<use href="#road" x="556.00" y="242.80" width="14.20" height="9.70"/>
<text x="572.70" y="250.00" font-size="10" fill="#31333F" font-weight="700" textLength="72.20" lengthAdjust="spacingAndGlyphs">9h 33m (511km)</text>
<use href="#bolt" x="648.30" y="239.50" width="10.30" height="12.50"/>
<text x="663.00" y="250.00" font-size="10" fill="#31333F" stroke="#31333F" stroke-width="0.08" textLength="85.40" lengthAdjust="spacingAndGlyphs">2 charges (134kWh)</text>
<rect x="772.50" y="246.50" width="10.00" height="10.00" rx="2.2" fill="#fff" stroke="#C5C6CC" stroke-width="1"/>
<text x="789.60" y="255.00" font-size="10.4" fill="#31333F" stroke="#31333F" stroke-width="0.08" textLength="36.30" lengthAdjust="spacingAndGlyphs">show all</text>
<use href="#flag" x="556.20" y="427.00" width="12.80" height="10.00"/>
<text x="572.50" y="435.00" font-size="9.8" fill="#31333F" stroke="#31333F" stroke-width="0.08" textLength="83.60" lengthAdjust="spacingAndGlyphs">arrive with 8% SOC</text>
<rect x="546.50" y="461.50" width="108.00" height="26.00" rx="5" fill="#fff" stroke="#D8D8DC" stroke-width="1"/>
<use href="#map" x="554.40" y="468.10" width="13.20" height="11.10"/>
<text x="570.70" y="478.00" font-size="10" fill="#31333F" stroke="#31333F" stroke-width="0.08" textLength="75.80" lengthAdjust="spacingAndGlyphs">launch directions</text>
</svg>
</body></html>
